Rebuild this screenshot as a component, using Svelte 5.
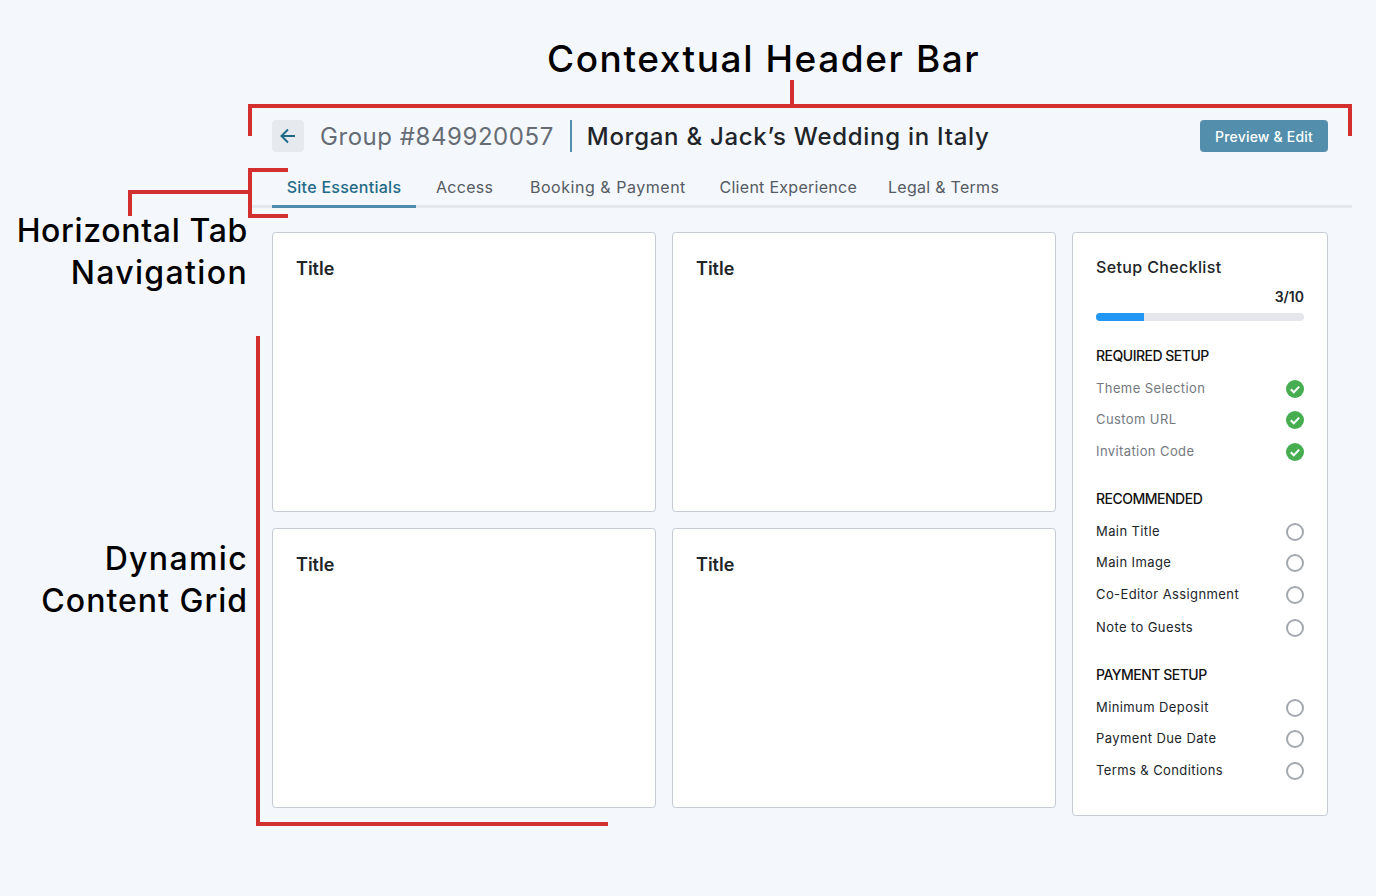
<script>
  const tabs = ["Site Essentials", "Access", "Booking & Payment", "Client Experience", "Legal & Terms"];
  const groups = [
    { title: "REQUIRED SETUP", done: true, items: ["Theme Selection", "Custom URL", "Invitation Code"] },
    { title: "RECOMMENDED", done: false, items: ["Main Title", "Main Image", "Co-Editor Assignment", "Note to Guests"] },
    { title: "PAYMENT SETUP", done: false, items: ["Minimum Deposit", "Payment Due Date", "Terms & Conditions"] }
  ];
</script>

<main class="page">
  <div class="annotations">
    <h2 class="note note-header">Contextual Header Bar</h2>
    <div class="line" style="left:790px;top:80px;width:4px;height:26px"></div>
    <div class="line" style="left:248px;top:104px;width:1104px;height:4px"></div>
    <div class="line" style="left:248px;top:104px;width:4px;height:32px"></div>
    <div class="line" style="left:1348px;top:104px;width:4px;height:32px"></div>

    <h2 class="note note-tabs"><span class="tight">Horizontal Tab</span><br /><span class="wide">Navigation</span></h2>
    <div class="line" style="left:248px;top:168px;width:40px;height:4px"></div>
    <div class="line" style="left:248px;top:168px;width:4px;height:50px"></div>
    <div class="line" style="left:248px;top:214px;width:40px;height:4px"></div>
    <div class="line" style="left:128px;top:190px;width:120px;height:4px"></div>
    <div class="line" style="left:128px;top:190px;width:4px;height:26px"></div>

    <h2 class="note note-grid"><span class="wide">Dynamic</span><br />Content Grid</h2>
    <div class="line" style="left:256px;top:336px;width:4px;height:490px"></div>
    <div class="line" style="left:256px;top:822px;width:352px;height:4px"></div>
  </div>

  <header class="header">
    <button class="back" aria-label="Back">
      <svg width="20" height="20" viewBox="0 0 20 20" fill="none" stroke="#1f6a87" stroke-width="2">
        <path d="M17 10H3.5M10 3.5L3.5 10l6.5 6.5" />
      </svg>
    </button>
    <span class="group-id">Group #849920057</span>
    <span class="divider"></span>
    <h1 class="event-name">Morgan &amp; Jack’s Wedding in Italy</h1>
    <button class="preview">Preview &amp; Edit</button>
  </header>

  <nav class="tabs">
    {#each tabs as tab, i}
      <div class="tab tab-{i}" class:active={i === 0}>{tab}</div>
    {/each}
  </nav>

  <section class="content">
    <div class="cards">
      {#each [0, 1, 2, 3] as card}
        <div class="card"><h3>Title</h3></div>
      {/each}
    </div>
    <aside class="checklist">
      <h2 class="check-title">Setup Checklist</h2>
      <div class="count">3/10</div>
      <div class="bar"><div class="fill" style="width:{(3 / 13) * 100}%"></div></div>
      {#each groups as group}
        <div class="group">
          <h4>{group.title}</h4>
          <ul>
            {#each group.items as item}
              <li class:done={group.done}>
                <span>{item}</span>
                {#if group.done}
                  <svg width="18" height="18" viewBox="0 0 18 18">
                    <circle cx="9" cy="9" r="9" fill="#46ae50" />
                    <path d="M4.8 9.2l3 3 5.4-5.6" fill="none" stroke="#fff" stroke-width="2" />
                  </svg>
                {:else}
                  <svg width="18" height="18" viewBox="0 0 18 18">
                    <circle cx="9" cy="9" r="8" fill="none" stroke="#a4a9af" stroke-width="2" />
                  </svg>
                {/if}
              </li>
            {/each}
          </ul>
        </div>
      {/each}
    </aside>
  </section>
</main>

<style>
  :global(body) {
    margin: 0;
    background: #f4f7fc;
  }

  .page {
    position: relative;
    box-sizing: border-box;
    height: 896px;
    padding: 120px 24px 0 248px;
    font-family: Inter, "Liberation Sans", sans-serif;
    color: #212529;
    overflow: hidden;
  }

  .line {
    position: absolute;
    background: #d32f2f;
  }

  .note {
    position: absolute;
    margin: 0;
    font-weight: 500;
    color: #000;
    white-space: nowrap;
  }

  .note-header {
    left: 547px;
    top: 35px;
    font-size: 37px;
    line-height: 48px;
    letter-spacing: 1.57px;
  }

  .note-tabs,
  .note-grid {
    right: 1128px;
    font-size: 32px;
    line-height: 42px;
    letter-spacing: 1px;
    text-align: right;
  }

  .note-tabs {
    top: 210px;
  }

  .note-grid {
    top: 538px;
  }

  .tight {
    letter-spacing: 0.65px;
  }

  .wide {
    letter-spacing: 1.35px;
  }

  .header {
    display: flex;
    align-items: center;
    height: 32px;
    padding: 0 24px;
  }

  .back {
    display: flex;
    align-items: center;
    justify-content: center;
    width: 32px;
    height: 32px;
    padding: 0;
    border: 0;
    border-radius: 4px;
    background: #e6e9ee;
  }

  .group-id {
    margin-left: 16px;
    font-size: 24px;
    letter-spacing: 0.55px;
    color: #666c74;
  }

  .divider {
    width: 2px;
    height: 32px;
    margin: 0 15px 0 16px;
    background: #5390ac;
  }

  .event-name {
    margin: 0;
    font-size: 24px;
    font-weight: 500;
    letter-spacing: 0.72px;
    color: #212529;
  }

  .preview {
    margin-left: auto;
    width: 128px;
    height: 32px;
    padding: 0;
    border: 0;
    border-radius: 4px;
    background: #538fad;
    color: #fff;
    font: 500 14px Inter, "Liberation Sans", sans-serif;
    letter-spacing: 0.2px;
  }

  .tabs {
    display: flex;
    height: 37px;
    margin: 16px 0 0;
    padding: 0 0 0 24px;
    border-bottom: 3px solid #e4e7eb;
  }

  .tab {
    box-sizing: border-box;
    height: 40px;
    padding-top: 8px;
    font-size: 16px;
    line-height: 22px;
    letter-spacing: 0.28px;
    color: #555b63;
  }

  .tab.active {
    width: 144px;
    text-align: center;
    color: #1f6a87;
    font-weight: 500;
    border-bottom: 3px solid #4f8dac;
  }

  .tab-1 {
    margin-left: 20px;
    width: 94px;
  }

  .tab-2 {
    width: 189.5px;
    letter-spacing: 0.53px;
  }

  .tab-3 {
    width: 168.5px;
  }

  .content {
    display: flex;
    align-items: flex-start;
    gap: 16px;
    margin-top: 24px;
    padding: 0 24px;
  }

  .cards {
    display: grid;
    grid-template-columns: 384px 384px;
    grid-auto-rows: 280px;
    gap: 16px;
  }

  .card,
  .checklist {
    box-sizing: border-box;
    background: #fff;
    border: 1px solid #c5cad3;
    border-radius: 4px;
    padding: 23px;
  }

  .card h3 {
    margin: 1px 0 0;
    font-size: 18px;
    line-height: 24px;
    font-weight: 600;
    color: #212529;
  }

  .checklist {
    width: 256px;
    height: 584px;
  }

  .check-title {
    margin: -1px 0 0;
    font-size: 16px;
    line-height: 24px;
    font-weight: 500;
    letter-spacing: 0.37px;
    color: #212529;
  }

  .count {
    margin-top: 8px;
    text-align: right;
    font-size: 14px;
    line-height: 20px;
    font-weight: 600;
  }

  .bar {
    height: 8px;
    margin-top: 6px;
    border-radius: 4px;
    background: #e4e7eb;
    overflow: hidden;
  }

  .fill {
    height: 100%;
    background: #2196f3;
  }

  .group {
    margin-top: 25px;
  }

  .group + .group {
    margin-top: 28px;
  }

  .group h4 {
    margin: 0;
    font-size: 14px;
    line-height: 20px;
    font-weight: 500;
    letter-spacing: -0.5px;
    color: #111;
  }

  .group ul {
    margin: 13.75px 0 0.25px;
    padding: 0;
    list-style: none;
  }

  .group li {
    display: flex;
    align-items: center;
    justify-content: space-between;
    height: 18px;
    margin-bottom: 13.5px;
    font-size: 13px;
    letter-spacing: 0.4px;
    color: #212529;
  }

  .group li:nth-child(4) {
    margin-top: 15.25px;
  }

  .group li span {
    margin-bottom: 2px;
  }

  .group li.done {
    color: #74797f;
  }
</style>
